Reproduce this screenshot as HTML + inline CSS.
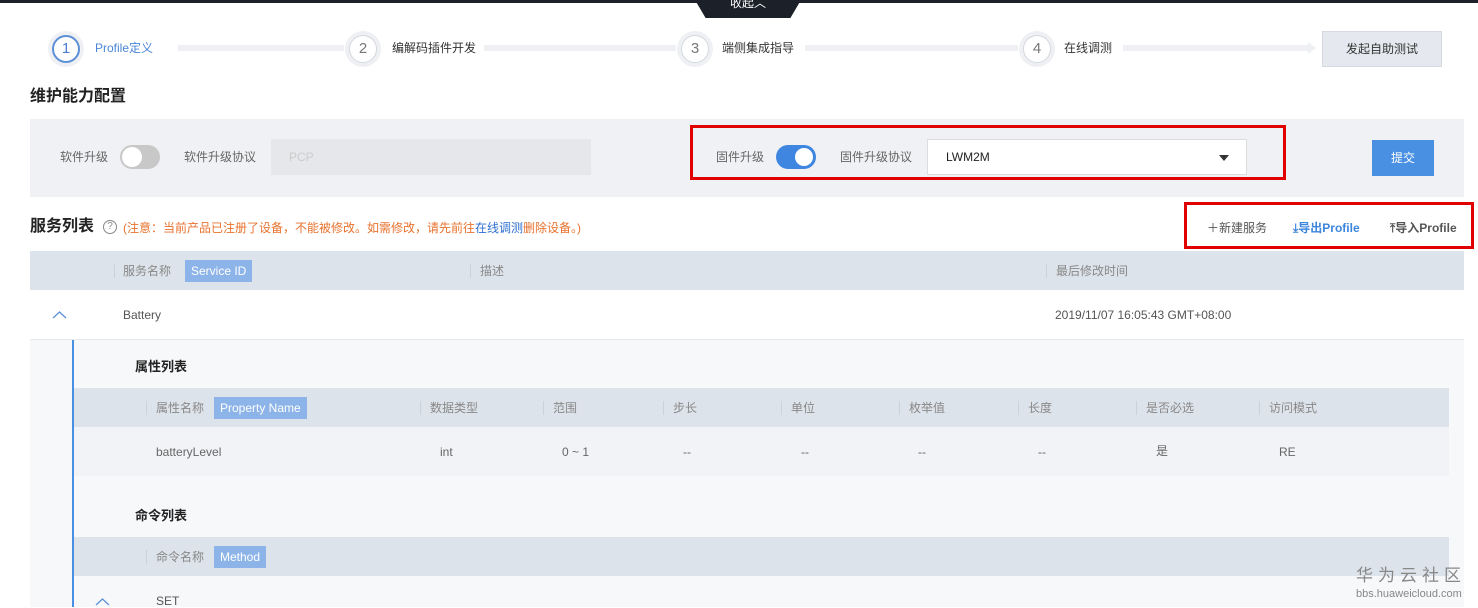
<!DOCTYPE html>
<html><head><meta charset="utf-8"><style>
*{margin:0;padding:0;box-sizing:border-box}
body{width:1478px;height:607px;overflow:hidden;background:#fff;font-family:"Liberation Sans","Noto Sans CJK SC",sans-serif;font-size:12px;line-height:14px;color:#666;position:relative}
.a{position:absolute;white-space:nowrap}
.circ{position:absolute;width:36px;height:36px;border-radius:50%;background:#eef0f4;}
.circ span{position:absolute;left:4px;top:4px;width:28px;height:28px;border-radius:50%;border:1px solid #d4d8de;background:#fff;text-align:center;line-height:26px;font-size:15px;color:#777}
.line{position:absolute;height:6px;background:#eef0f3;top:45px}
.tag{position:absolute;background:#8db4e8;color:#fff;height:22px;line-height:22px;padding:0 6px;font-size:12px}
.sep{position:absolute;width:1px;height:14px;background:#ccd2da}
.red{position:absolute;border:3px solid #e00000}
</style></head><body>
<div class="a" style="left:0;top:0;width:1478px;height:3px;background:#1c2029"></div>
<div class="a" style="left:695px;top:0;width:106px;height:18px;background:#1c2029;clip-path:polygon(0 0,100% 0,90% 100%,10% 100%);color:#fff;text-align:center;font-size:12px;line-height:6px">收起︿</div>

<div class="circ" style="left:48px;top:31px"><span style="border:2px solid #5b8fd6;color:#4a7fcf;line-height:24px">1</span></div>
<div class="a" style="left:95px;top:41px;color:#4a86d6">Profile定义</div>
<div class="line" style="left:178px;width:166px"></div>
<div class="circ" style="left:345px;top:31px"><span>2</span></div>
<div class="a" style="left:392px;top:41px;color:#333">编解码插件开发</div>
<div class="line" style="left:484px;width:192px"></div>
<div class="circ" style="left:677px;top:31px"><span>3</span></div>
<div class="a" style="left:722px;top:41px;color:#333">端侧集成指导</div>
<div class="line" style="left:805px;width:213px"></div>
<div class="circ" style="left:1019px;top:31px"><span>4</span></div>
<div class="a" style="left:1064px;top:41px;color:#333">在线调测</div>
<div class="line" style="left:1123px;width:187px"></div>
<div class="a" style="left:1308px;top:42px;width:0;height:0;border-top:6px solid transparent;border-bottom:6px solid transparent;border-left:8px solid #eef0f3"></div>
<div class="a" style="left:1322px;top:31px;width:120px;height:36px;background:#e5e8ee;border:1px solid #d6dae0;text-align:center;line-height:34px;color:#333">发起自助测试</div>

<div class="a" style="left:30px;top:88px;font-size:16px;line-height:18px;font-weight:bold;color:#222">维护能力配置</div>
<div class="a" style="left:30px;top:119px;width:1434px;height:78px;background:#f0f1f4"></div>
<div class="a" style="left:60px;top:150px">软件升级</div>
<div class="a" style="left:120px;top:145px;width:40px;height:24px;border-radius:12px;background:#c8c8c8"><div style="position:absolute;left:2px;top:2px;width:20px;height:20px;border-radius:50%;background:#fff"></div></div>
<div class="a" style="left:184px;top:150px">软件升级协议</div>
<div class="a" style="left:271px;top:139px;width:320px;height:36px;background:#e6e7ea;color:#ccc;line-height:36px;padding-left:18px">PCP</div>
<div class="a" style="left:716px;top:150px">固件升级</div>
<div class="a" style="left:776px;top:145px;width:40px;height:24px;border-radius:12px;background:#3f86e0"><div style="position:absolute;right:3px;top:3px;width:18px;height:18px;border-radius:50%;background:#fff"></div></div>
<div class="a" style="left:840px;top:150px">固件升级协议</div>
<div class="a" style="left:927px;top:139px;width:320px;height:36px;background:#fff;border:1px solid #ddd;color:#222;line-height:34px;padding-left:18px">LWM2M</div>
<div class="a" style="left:1219px;top:155px;border-left:5px solid transparent;border-right:5px solid transparent;border-top:6px solid #333"></div>
<div class="red" style="left:690px;top:125px;width:596px;height:55px"></div>
<div class="a" style="left:1372px;top:140px;width:62px;height:36px;background:#4a90e2;color:#fff;text-align:center;line-height:36px">提交</div>

<div class="a" style="left:30px;top:218px;font-size:16px;line-height:18px;font-weight:bold;color:#222">服务列表</div>
<div class="a" style="left:103px;top:220px;width:14px;height:14px;border:1px solid #888;border-radius:50%;font-size:10px;line-height:12px;text-align:center;color:#888">?</div>
<div class="a" style="left:123px;top:221px;color:#e8722e">(注意：当前产品已注册了设备，不能被修改。如需修改，请先前往<span style="color:#2f6fd0">在线调测</span>删除设备。)</div>
<div class="red" style="left:1184px;top:202px;width:290px;height:47px"></div>
<div class="a" style="left:1207px;top:221px;color:#555">＋新建服务</div>
<div class="a" style="left:1293px;top:221px;color:#3c86dd;font-weight:bold">⤓导出Profile</div>
<div class="a" style="left:1390px;top:221px;color:#555;font-weight:bold">⤒导入Profile</div>

<div class="a" style="left:30px;top:251px;width:1434px;height:39px;background:#dde3ea"></div>
<div class="sep" style="left:114px;top:264px"></div>
<div class="a" style="left:123px;top:264px;color:#888">服务名称</div>
<div class="tag" style="left:185px;top:260px">Service ID</div>
<div class="sep" style="left:470px;top:264px"></div>
<div class="a" style="left:480px;top:264px;color:#888">描述</div>
<div class="sep" style="left:1046px;top:264px"></div>
<div class="a" style="left:1056px;top:264px;color:#888">最后修改时间</div>
<svg class="a" style="left:52px;top:310px" width="15" height="10"><path d="M1 8 L7.5 2 L14 8" fill="none" stroke="#5b8fd6" stroke-width="1.2"/></svg>
<div class="a" style="left:123px;top:308px;color:#555">Battery</div>
<div class="a" style="left:1055px;top:308px;color:#555">2019/11/07 16:05:43 GMT+08:00</div>
<div class="a" style="left:30px;top:339px;width:1434px;height:1px;background:#e8eaee"></div>

<div class="a" style="left:30px;top:340px;width:1434px;height:267px;background:#f7f8fa"></div>
<div class="a" style="left:72px;top:340px;width:2px;height:267px;background:#4a90e2"></div>
<div class="a" style="left:135px;top:359px;font-size:13px;line-height:16px;font-weight:bold;color:#222">属性列表</div>
<div class="a" style="left:74px;top:388px;width:1375px;height:39px;background:#dde3ea"></div>
<div class="sep" style="left:146px;top:401px"></div><div class="a" style="left:156px;top:401px;color:#888">属性名称</div>
<div class="tag" style="left:214px;top:397px">Property Name</div>
<div class="sep" style="left:420px;top:401px"></div><div class="a" style="left:430px;top:401px;color:#888">数据类型</div>
<div class="sep" style="left:543px;top:401px"></div><div class="a" style="left:553px;top:401px;color:#888">范围</div>
<div class="sep" style="left:663px;top:401px"></div><div class="a" style="left:673px;top:401px;color:#888">步长</div>
<div class="sep" style="left:781px;top:401px"></div><div class="a" style="left:791px;top:401px;color:#888">单位</div>
<div class="sep" style="left:899px;top:401px"></div><div class="a" style="left:909px;top:401px;color:#888">枚举值</div>
<div class="sep" style="left:1018px;top:401px"></div><div class="a" style="left:1028px;top:401px;color:#888">长度</div>
<div class="sep" style="left:1136px;top:401px"></div><div class="a" style="left:1146px;top:401px;color:#888">是否必选</div>
<div class="sep" style="left:1259px;top:401px"></div><div class="a" style="left:1269px;top:401px;color:#888">访问模式</div>
<div class="a" style="left:74px;top:427px;width:1375px;height:49px;background:#f1f3f6"></div>
<div class="a" style="left:156px;top:445px">batteryLevel</div>
<div class="a" style="left:440px;top:445px">int</div>
<div class="a" style="left:562px;top:445px">0 ~ 1</div>
<div class="a" style="left:683px;top:445px">--</div>
<div class="a" style="left:801px;top:445px">--</div>
<div class="a" style="left:918px;top:445px">--</div>
<div class="a" style="left:1038px;top:445px">--</div>
<div class="a" style="left:1156px;top:444px">是</div>
<div class="a" style="left:1279px;top:445px">RE</div>
<div class="a" style="left:135px;top:508px;font-size:13px;line-height:16px;font-weight:bold;color:#222">命令列表</div>
<div class="a" style="left:74px;top:537px;width:1375px;height:39px;background:#dde3ea"></div>
<div class="sep" style="left:146px;top:550px"></div><div class="a" style="left:156px;top:550px;color:#888">命令名称</div>
<div class="tag" style="left:214px;top:546px">Method</div>
<svg class="a" style="left:95px;top:597px" width="15" height="10"><path d="M1 8 L7.5 2 L14 8" fill="none" stroke="#5b8fd6" stroke-width="1.2"/></svg>
<div class="a" style="left:156px;top:594px;color:#555">SET</div>

<div class="a" style="left:1356px;top:567px;font-size:17px;line-height:18px;color:#888;letter-spacing:5px">华为云社区</div>
<div class="a" style="left:1356px;top:588px;font-size:11px;line-height:12px;color:#888">bbs.huaweicloud.com</div>
</body></html>
